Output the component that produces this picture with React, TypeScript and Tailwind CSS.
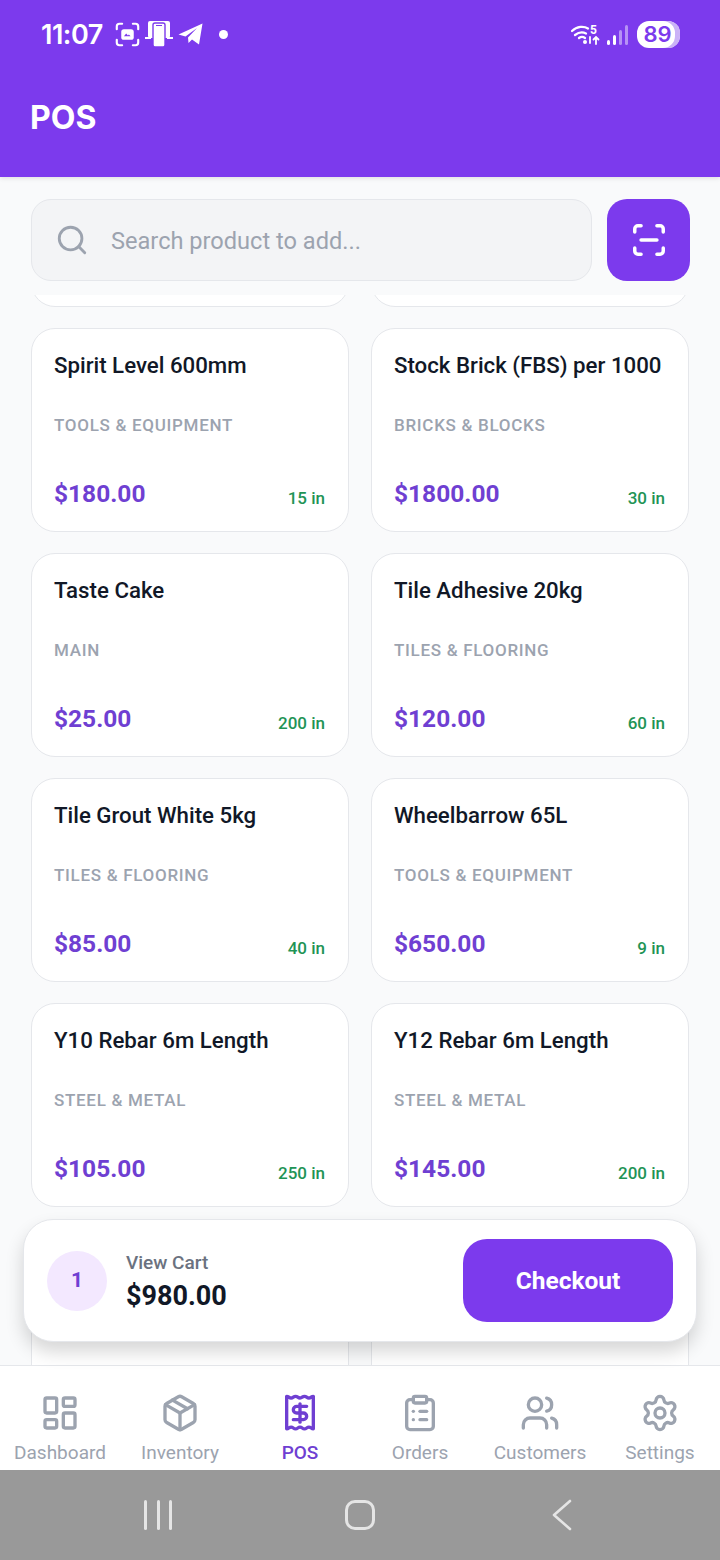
import { ClipboardList, LayoutDashboard, Package, ScanLine, Search, Settings, Users } from "lucide-react";
import { type ComponentType } from "react";

const products = [
  { name: "", category: "", price: "", stock: "" },
  { name: "", category: "", price: "", stock: "" },
  { name: "Spirit Level 600mm", category: "TOOLS & EQUIPMENT", price: "$180.00", stock: "15 in" },
  { name: "Stock Brick (FBS) per 1000", category: "BRICKS & BLOCKS", price: "$1800.00", stock: "30 in" },
  { name: "Taste Cake", category: "MAIN", price: "$25.00", stock: "200 in" },
  { name: "Tile Adhesive 20kg", category: "TILES & FLOORING", price: "$120.00", stock: "60 in" },
  { name: "Tile Grout White 5kg", category: "TILES & FLOORING", price: "$85.00", stock: "40 in" },
  { name: "Wheelbarrow 65L", category: "TOOLS & EQUIPMENT", price: "$650.00", stock: "9 in" },
  { name: "Y10 Rebar 6m Length", category: "STEEL & METAL", price: "$105.00", stock: "250 in" },
  { name: "Y12 Rebar 6m Length", category: "STEEL & METAL", price: "$145.00", stock: "200 in" },
  { name: "", category: "", price: "", stock: "" },
  { name: "", category: "", price: "", stock: "" },
];

const ReceiptIcon = ({ size, strokeWidth }: { size?: number; strokeWidth?: number }) => {
  return (
    <svg width={size} height={size} viewBox="0 0 24 24" fill="none" stroke="currentColor" strokeWidth={strokeWidth} strokeLinecap="round" strokeLinejoin="round">
      <path d="M4 21.500V2c1.330 0 1.330 1 2.670 1s1.330-1 2.670-1 1.330 1 2.660 1 1.330-1 2.670-1 1.330 1 2.670 1 1.330-1 2.660-1v19.500c-1.330 0-1.330-1-2.660-1s-1.340 1-2.670 1-1.340-1-2.670-1-1.330 1-2.660 1-1.340-1-2.670-1-1.340 1-2.670 1Z" />
      <path d="M16 8h-6a2 2 0 1 0 0 4h4a2 2 0 1 1 0 4H8" />
      <path d="M12 17.500v-11" />
    </svg>
  );
};

const tabs: { label: string; icon: ComponentType<{ size?: number; strokeWidth?: number }>; active?: boolean }[] = [
  { label: "Dashboard", icon: LayoutDashboard },
  { label: "Inventory", icon: Package },
  { label: "POS", icon: ReceiptIcon, active: true },
  { label: "Orders", icon: ClipboardList },
  { label: "Customers", icon: Users },
  { label: "Settings", icon: Settings },
];

const App = () => {
  return (
    <div className="flex h-[1560px] w-[720px] flex-col overflow-hidden bg-[#f9fafb] font-['Roboto',sans-serif]">
      <Header />
      <main className="relative flex min-h-0 flex-1 flex-col">
        <SearchRow />
        <ProductGrid />
        <CartBar />
      </main>
      <BottomTabs />
      <SystemNav />
    </div>
  );
};

export default App;

const Header = () => {
  return (
    <header className="relative z-10 h-[177px] shrink-0 bg-[#7c3aed] text-white shadow-[0_1px_5px_rgba(0,0,0,0.12)]">
      <StatusBar />
      <h1 className="mt-[34px] pl-[30px] font-['Inter',sans-serif] text-[32px] leading-[40px] font-bold">POS</h1>
    </header>
  );
};

const StatusBar = () => {
  return (
    <div className="flex h-[64px] items-center justify-between pt-[4px] pr-[40px] pl-[41px]">
      <div className="flex items-center">
        <span className="font-['Inter',sans-serif] text-[27px] leading-none font-semibold tracking-[-0.5px]">11:07</span>
        <svg width="25" height="25" viewBox="0 0 28 28" fill="none" className="ml-[12px]">
          <path d="M2 8V5a3 3 0 0 1 3-3h3M20 2h3a3 3 0 0 1 3 3v3M26 20v3a3 3 0 0 1-3 3h-3M8 26H5a3 3 0 0 1-3-3v-3" stroke="white" strokeWidth="2.400" strokeLinecap="round" />
          <rect x="7" y="8" width="14" height="12" rx="3" fill="white" />
          <path d="M10 16l2.500-3 2 2 1-1 2 2z" fill="#7c3aed" />
        </svg>
        <svg width="28" height="28" viewBox="0 0 28 28" className="ml-[5px]" fill="white">
          <rect x="3" y="1" width="22" height="17" rx="2" />
          <rect x="8" y="3" width="12" height="24" rx="2" stroke="#7c3aed" strokeWidth="1.400" />
          <rect x="0" y="17" width="6" height="2" />
          <rect x="22" y="17" width="6" height="2" />
          <rect x="11" y="5" width="6" height="1" fill="#7c3aed" />
        </svg>
        <svg width="25" height="22" viewBox="0 0 25 22" className="ml-[5px]" fill="white">
          <path d="M0.500 11.500L24.500 0.500 21 21.500 14 16.500 10.500 20 10 14.500 19 5 7.500 13.500z" />
        </svg>
        <span className="ml-[16px] size-[9px] rounded-full bg-white" />
      </div>
      <div className="flex items-center">
        <svg width="29" height="24" viewBox="0 0 29 24" fill="none" stroke="white" strokeWidth="2.200" strokeLinecap="round" className="mr-[2px]">
          <path d="M1 9c5-5 12-5 16-2.500M4 13c4-3 8-3 11-1.500M8 16c2-1.500 4-1.500 6 0" />
          <circle cx="14" cy="20" r="2" fill="white" stroke="none" />
          <path d="M19 15v6M25 22v-7m-2.500 2.500L25 15l2.500 2.500" strokeWidth="1.800" />
          <text x="19" y="12" fill="white" stroke="none" fontSize="12" fontWeight="700" fontFamily="Roboto, sans-serif">5</text>
        </svg>
        <div className="mt-[2px] ml-[5px] flex h-[20px] items-end gap-[3px]">
          <span className="h-[5px] w-[3px] rounded-full bg-white" />
          <span className="h-[10px] w-[3px] rounded-full bg-white" />
          <span className="h-[15px] w-[3px] rounded-full bg-white/45" />
          <span className="h-[20px] w-[3px] rounded-full bg-white/45" />
        </div>
        <div className="ml-[9px] flex h-[27px] w-[43px] items-center justify-center rounded-[12px] bg-white pr-[2px] shadow-[inset_-5px_0_0_rgba(196,170,246,0.9)]">
          <span className="font-['Inter',sans-serif] text-[22px] leading-none font-semibold text-[#7c3aed]">89</span>
        </div>
      </div>
    </div>
  );
};

const SearchRow = () => {
  return (
    <div className="flex shrink-0 gap-[15px] pt-[22px] pr-[30px] pb-[14px] pl-[31px]">
      <div className="flex h-[82px] flex-1 items-center rounded-[20px] border border-[#e5e7eb] bg-[#f3f4f6] pl-[23px]">
        <Search size={34} strokeWidth={2} className="text-[#9ca3af]" />
        <span className="mt-[3px] ml-[22px] text-[23.600px] text-[#9ca3af]">Search product to add...</span>
      </div>
      <button className="flex h-[82px] w-[83px] items-center justify-center rounded-[20px] bg-[#7c3aed] text-white">
        <ScanLine size={38} strokeWidth={2.200} />
      </button>
    </div>
  );
};

const ProductGrid = () => {
  return (
    <div className="min-h-0 flex-1 overflow-hidden pr-[31px] pl-[31px]">
      {/* scrolled list, first row is mostly out of view */}
      <div className="mt-[-192px] grid grid-cols-2 gap-x-[22px] gap-y-[21px]">
        {products.map((product, index) => (
          <ProductCard key={index} {...product} />
        ))}
      </div>
    </div>
  );
};

const ProductCard = ({ name, category, price, stock }: { name: string; category: string; price: string; stock: string }) => {
  return (
    <div className="flex h-[204px] flex-col rounded-[24px] border border-[#e5e7eb] bg-white pt-[21px] pr-[23px] pl-[22px]">
      <p className="h-[30px] text-[22.250px] leading-[30px] font-medium whitespace-nowrap text-[#111827]">{name}</p>
      <p className="mt-[32px] h-[26px] text-[17px] leading-[26px] font-medium tracking-[0.7px] text-[#9ca3af]">{category}</p>
      <div className="mt-[40px] flex h-[32px] items-end justify-between">
        <span className="text-[24.500px] leading-[32px] font-bold text-[#6f3fd2]">{price}</span>
        <span className="-mb-[1px] text-[17px] leading-[26px] font-medium text-[#1f9456]">{stock}</span>
      </div>
    </div>
  );
};

const CartBar = () => {
  return (
    <div className="absolute right-[23px] bottom-[23px] left-[23px] flex h-[123px] items-center justify-between rounded-[30px] border border-[#e5e7eb] bg-white pr-[23px] pl-[23px] shadow-[0_10px_18px_rgba(0,0,0,0.16)]">
      <div className="flex items-center">
        <div className="flex size-[60px] items-center justify-center rounded-full bg-[#f3e8ff] text-[21px] font-bold text-[#6f3fd2]">1</div>
        <div className="mt-[1px] ml-[19px]">
          <p className="text-[19px] leading-[26px] font-medium text-[#6b7280]">View Cart</p>
          <p className="mt-[3px] text-[27px] leading-[34px] font-bold text-[#111827]">$980.00</p>
        </div>
      </div>
      <button className="h-[83px] w-[210px] rounded-[24px] bg-[#7c3aed] pt-[1px] text-[24.500px] font-bold text-white">Checkout</button>
    </div>
  );
};

const BottomTabs = () => {
  return (
    <nav className="flex h-[105px] shrink-0 border-t border-[#e5e7eb] bg-white pt-[27px]">
      {tabs.map(({ label, icon: Icon, active }) => (
        <div key={label} className={`flex flex-1 flex-col items-center ${active ? "text-[#6f3fd2]" : "text-[#9ca3af]"}`}>
          <Icon size={40} strokeWidth={2} />
          <span className={`mt-[8px] text-[19px] leading-[24px] ${active ? "font-medium" : "font-normal"}`}>{label}</span>
        </div>
      ))}
    </nav>
  );
};

const SystemNav = () => {
  return (
    <div className="flex h-[90px] shrink-0 items-center bg-[#999999] pl-[144px]">
      <div className="flex gap-[9.500px]">
        <span className="h-[30px] w-[3px] rounded-full bg-[#e5e5e5]" />
        <span className="h-[30px] w-[3px] rounded-full bg-[#e5e5e5]" />
        <span className="h-[30px] w-[3px] rounded-full bg-[#e5e5e5]" />
      </div>
      <span className="ml-[173px] size-[30px] rounded-[10px] border-[3px] border-[#e5e5e5]" />
      <svg width="20" height="32" viewBox="0 0 20 32" fill="none" stroke="#e5e5e5" strokeWidth="2.600" strokeLinecap="round" strokeLinejoin="round" className="ml-[177px]">
        <path d="M18 2L2 16l16 14" />
      </svg>
    </div>
  );
};
